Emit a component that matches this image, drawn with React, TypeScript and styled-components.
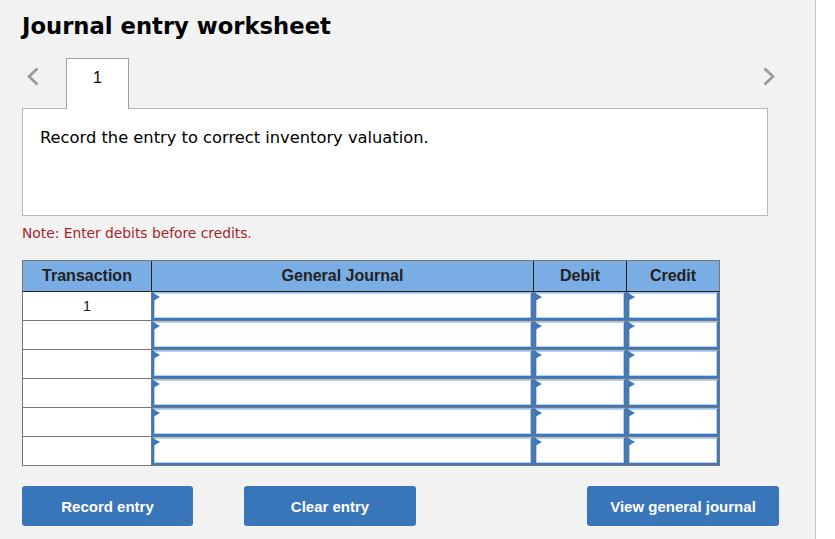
import React from "react";
import styled, { createGlobalStyle } from "styled-components";

const Global = createGlobalStyle`
  html, body { margin: 0; padding: 0; background: #ffffff; }
  * { box-sizing: border-box; }
`;

const Panel = styled.div`
  width: 816px;
  min-height: 539px;
  background: #f2f2f2;
  border-right: 1px solid #c4c4c4;
  padding: 12px 0 0 22px;
  font-family: "DejaVu Sans", Verdana, sans-serif;
`;

const Title = styled.h1`
  margin: 0;
  font-size: 22.7px;
  line-height: 28px;
  font-weight: bold;
  color: #000;
`;

const TabRow = styled.div`
  display: flex;
  align-items: flex-start;
  width: 758px;
  height: 50px;
  margin-top: 18px;
`;

const Chevron = styled.svg<{ $side: "left" | "right" }>`
  width: 12px;
  height: 19px;
  margin-top: 9px;
  flex: none;
  ${(p) => (p.$side === "left" ? "margin-left: 5px;" : "margin-left: auto; margin-right: 5px;")}
`;

const Tab = styled.div`
  position: relative;
  z-index: 1;
  width: 63px;
  height: 51px;
  margin-left: 27px;
  background: #fff;
  border: 1px solid #a0a0a0;
  border-bottom: none;
  display: flex;
  justify-content: center;
  padding-top: 10px;
  font-family: "Liberation Sans", Arial, sans-serif;
  font-size: 16px;
  line-height: 18px;
  color: #000;
`;

const Question = styled.div`
  width: 746px;
  height: 108px;
  background: #fff;
  border: 1px solid #b8b8b8;
  padding: 19px 17px;
  font-size: 16.3px;
  line-height: 20px;
  color: #000;
`;

const Note = styled.div`
  margin-top: 8px;
  font-size: 13.8px;
  line-height: 18px;
  color: #a3262b;
`;

const Grid = styled.div`
  margin-top: 18px;
  display: grid;
  grid-template-columns: 129px 382px 93px 93px;
  grid-template-rows: 31px;
  grid-auto-rows: 29px;
  width: 698px;
  border-top: 1px solid #777;
  border-left: 1px solid #777;
  font-family: "Liberation Sans", Arial, sans-serif;
`;

const HeadCell = styled.div<{ $last?: boolean }>`
  background: #79ade4;
  border-right: 1px solid ${(p) => (p.$last ? "#777" : "#222")};
  border-bottom: 1px solid #222;
  display: flex;
  align-items: center;
  justify-content: center;
  font-weight: bold;
  font-size: 16px;
  color: #222;
  padding-bottom: 1px;
`;

const TxCell = styled.div`
  background: #fff;
  border-right: 1px solid #777;
  border-bottom: 1px solid #777;
  display: flex;
  justify-content: center;
  padding-top: 5px;
  font-size: 15px;
  line-height: 18px;
  color: #222;
`;

const InputCell = styled.div`
  position: relative;
  border-right: 1px solid #777;
  border-bottom: 1px solid #777;
  background: #fff;
`;

const Field = styled.div`
  width: 100%;
  height: 100%;
  border: 2px solid #3b78c0;
  border-top: 1px solid #9fc1ea;
  box-shadow: inset 0 0 0 1px #b6d0f0;
  background: #fff;
`;

const Flag = styled.span`
  position: absolute;
  left: 1px;
  top: 1px;
  width: 0;
  height: 0;
  border-top: 4px solid transparent;
  border-bottom: 4px solid transparent;
  border-left: 7px solid #3b78c0;
`;

const Buttons = styled.div`
  display: flex;
  width: 757px;
  margin-top: 20px;
  gap: 51px;
`;

const Button = styled.button<{ $w: number; $push?: boolean }>`
  width: ${(p) => p.$w}px;
  height: 40px;
  border: none;
  border-radius: 3px;
  background: #3975b9;
  color: #fff;
  font-family: "Liberation Sans", Arial, sans-serif;
  font-weight: bold;
  font-size: 15px;
  cursor: pointer;
  ${(p) => (p.$push ? "margin-left: auto;" : "")}
`;

const ChevronIcon = ({ side }: { side: "left" | "right" }) => (
  <Chevron $side={side} viewBox="0 0 12 19">
    <polyline
      points={side === "left" ? "10.5,1.5 2,9.5 10.5,17.5" : "1.5,1.5 10,9.5 1.5,17.5"}
      fill="none"
      stroke="#9a9a9a"
      strokeWidth="2.8"
    />
  </Chevron>
);

const rows = ["1", "", "", "", "", ""];

export default function App() {
  return (
    <>
      <Global />
      <Panel>
        <Title>Journal entry worksheet</Title>
        <TabRow>
          <ChevronIcon side="left" />
          <Tab>1</Tab>
          <ChevronIcon side="right" />
        </TabRow>
        <Question>Record the entry to correct inventory valuation.</Question>
        <Note>Note: Enter debits before credits.</Note>
        <Grid>
          <HeadCell>Transaction</HeadCell>
          <HeadCell>General Journal</HeadCell>
          <HeadCell>Debit</HeadCell>
          <HeadCell $last>Credit</HeadCell>
          {rows.map((r, i) => (
            <React.Fragment key={i}>
              <TxCell>{r}</TxCell>
              {[0, 1, 2].map((c) => (
                <InputCell key={c}>
                  <Field />
                  <Flag />
                </InputCell>
              ))}
            </React.Fragment>
          ))}
        </Grid>
        <Buttons>
          <Button $w={171}>Record entry</Button>
          <Button $w={172}>Clear entry</Button>
          <Button $w={192} $push>View general journal</Button>
        </Buttons>
      </Panel>
    </>
  );
}
